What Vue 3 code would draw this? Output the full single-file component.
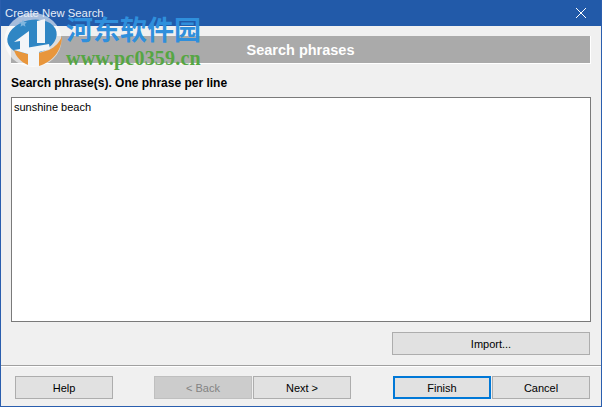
<template>
  <div class="window">
    <header class="titlebar">
      <span class="title">Create New Search</span>
      <svg class="close" width="12" height="12" viewBox="0 0 12 12"><path d="M1 1 L11 11 M11 1 L1 11" stroke="#fff" stroke-width="1" fill="none"/></svg>
    </header>
    <main class="content">
      <div class="banner">Search phrases</div>
      <label class="label">Search phrase(s). One phrase per line</label>
      <div class="input">sunshine beach</div>
      <div class="import-row"><button class="btn import">Import...</button></div>
    </main>
    <footer class="footer">
      <button class="btn">Help</button>
      <div class="nav">
        <button class="btn disabled">&lt; Back</button>
        <button class="btn">Next &gt;</button>
      </div>
      <div class="nav">
        <button class="btn primary">Finish</button>
        <button class="btn">Cancel</button>
      </div>
    </footer>
    <div class="watermark">
      <svg class="wm-logo" width="60" height="56" viewBox="3 12 60 56">
        <ellipse cx="33" cy="40" rx="28.500" ry="27" fill="#fff" opacity=".6"/>
        <ellipse cx="32" cy="37" rx="25" ry="17" transform="rotate(-12 32 37)" fill="#2f86c4"/>
        <path d="M62 36 C62 51 52 62 39 66 L39 53 L49 50 C55 47 60 42 62 36 Z" fill="#e8963c"/>
        <path d="M14 50 L28 54 L28 65 C21 62 16 57 14 50 Z" fill="#e8963c"/>
        <path d="M14 42 L29 31 L29 50 L20 50 L20 41 Z" fill="#f2f5f8"/>
        <path d="M37 21 L45 19 L45 43 L37 43 Z" fill="#f2f5f8"/>
        <path d="M14 50 L49 44 L50 49 L39 52 L39 66 L28 66 L28 54 Z" fill="#f2f5f8"/>
        <path d="M23 19.500 l1.200 2.500 2.700 .3 -2 1.800 .6 2.600 -2.500 -1.400 -2.500 1.400 .6 -2.600 -2 -1.800 2.700 -.3 Z" fill="#7fb6de"/>
      </svg>
      <div class="wm-text">
        <div class="wm-cn">河东软件园</div>
        <div class="wm-url">www.pc0359.cn</div>
      </div>
    </div>
  </div>
</template>

<script setup>
</script>

<style>
html, body { margin: 0; padding: 0; overflow: hidden; }
</style>

<style scoped>
.window {
  position: relative;
  width: 602px;
  height: 407px;
  box-sizing: border-box;
  border: 1px solid #2a5eae;
  border-top: 0;
  background: #f0f0f0;
  display: flex;
  flex-direction: column;
  font-family: "Liberation Sans", Arial, sans-serif;
  font-size: 11px;
  color: #000;
  overflow: hidden;
}
.titlebar {
  height: 26px;
  flex: none;
  margin: 0 -1px;
  padding: 0 15px 0 5px;
  background: #225aa9;
  display: flex;
  align-items: center;
  justify-content: space-between;
  color: #fff;
}
.title { font-size: 11.300px; color: #e6edf7; position: relative; z-index: 2; }
.content {
  flex: 1;
  display: flex;
  flex-direction: column;
  padding: 10px 10px 0;
  min-height: 0;
}
.banner {
  height: 28px;
  box-sizing: border-box;
  background: #aaa;
  border-right: 1px solid #fff;
  border-bottom: 1px solid #fff;
  display: flex;
  align-items: center;
  justify-content: center;
  color: #fff;
  font-weight: 700;
  font-size: 14.500px;
}
.label {
  margin-top: 12px;
  height: 14px;
  line-height: 14px;
  font-weight: 700;
  font-size: 12px;
}
.input {
  margin-top: 7px;
  height: 225px;
  box-sizing: border-box;
  background: #fff;
  border: 1px solid #7a7a7a;
  padding: 2px 2px;
  font-size: 11px;
  line-height: 15px;
}
.import-row {
  display: flex;
  justify-content: flex-end;
  padding: 10px 1px 0 0;
}
.btn {
  width: 98px;
  height: 23px;
  box-sizing: border-box;
  padding: 0;
  background: #e1e1e1;
  border: 1px solid #adadad;
  font-family: inherit;
  font-size: 11px;
  color: #000;
  border-radius: 0;
}
.import { width: 198px; }
.disabled { background: #cccccc; border-color: #bfbfbf; color: #838383; }
.primary { border: 2px solid #0078d7; }
.footer {
  flex: none;
  height: 41px;
  box-sizing: border-box;
  border-top: 1px solid #a0a0a0;
  box-shadow: inset 0 1px 0 #fff;
  padding: 10px 11px 0 14px;
  display: flex;
  justify-content: space-between;
  align-items: flex-start;
}
.nav { display: flex; gap: 1px; }
.footer .nav:nth-child(2) { margin-left: -1px; }
.watermark {
  position: absolute;
  left: 2px;
  top: 12px;
  display: flex;
  gap: 3px;
  pointer-events: none;
  z-index: 1;
}
.wm-logo { flex: none; }
.wm-text { display: flex; flex-direction: column; width: 136px; margin-top: 1px; }
.wm-cn {
  font-family: "Noto Sans CJK SC", sans-serif;
  font-weight: 700;
  font-size: 27px;
  line-height: 32px;
  white-space: nowrap;
  color: #2f8fdc;
}
.wm-url {
  font-family: "Liberation Serif", serif;
  font-weight: 700;
  font-size: 20px;
  line-height: 20px;
  margin-top: 3px;
  white-space: nowrap;
  letter-spacing: .2px;
  color: #55a643;
}
</style>
